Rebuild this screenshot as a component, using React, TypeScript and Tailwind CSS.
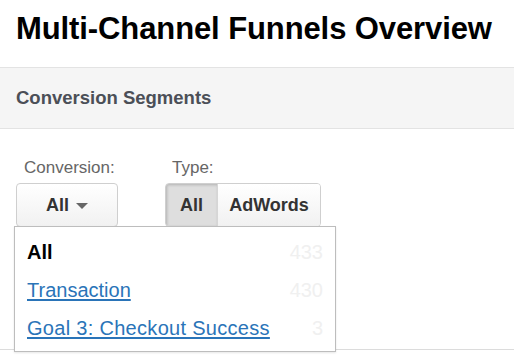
import React from 'react';

const font = { fontFamily: '"Liberation Sans", Arial, sans-serif' };

export default function App() {
  return (
    <div className="w-[514px] h-[363px] bg-white overflow-hidden" style={font}>
      {/* Page title */}
      <div className="h-[67px] pl-4 pt-[11px]">
        <h1 className="text-[31px] leading-[36px] font-bold text-black tracking-[-0.1px]">
          Multi-Channel Funnels Overview
        </h1>
      </div>

      {/* Section header */}
      <div className="h-[62px] bg-[#f5f5f5] border-y border-[#e3e3e3] flex items-center pl-4">
        <span className="text-[18.5px] font-bold text-[#4b4f57]">Conversion Segments</span>
      </div>

      {/* Controls */}
      <div className="h-[221px] border-b border-[#dcdcdc] pt-[29px] pl-4">
        <div className="flex gap-[47px]">
          <div className="flex flex-col">
            <span className="text-[17px] leading-[20px] text-[#666] pl-2">Conversion:</span>
            <div className="relative mt-[5px]">
              <button className="w-[102px] h-[44px] rounded-[4px] border border-[#cfcfcf] bg-gradient-to-b from-white to-[#f1f1f1] flex items-center justify-center gap-[7px] text-[18px] font-bold text-[#333]">
                All
                <svg width="12" height="6" viewBox="0 0 12 6" className="mt-[1px]">
                  <path d="M0 0h12L6 6z" fill="#666" />
                </svg>
              </button>

              {/* Dropdown menu */}
              <div className="absolute left-[-2px] top-[43px] w-[322px] h-[126px] bg-white border border-[#bdbdbd] shadow-[0_1px_2px_rgba(0,0,0,0.1)] px-[12px] pt-[6px]">
                <div className="flex justify-between items-center h-[38px]">
                  <span className="text-[20px] font-bold text-black">All</span>
                  <span className="text-[20px] text-[#f0f0f0]">433</span>
                </div>
                <div className="flex justify-between items-center h-[38px]">
                  <span className="text-[20px] text-[#2a74b8] underline underline-offset-2">Transaction</span>
                  <span className="text-[20px] text-[#f0f0f0]">430</span>
                </div>
                <div className="flex justify-between items-center h-[37px]">
                  <span className="text-[20px] text-[#2a74b8] underline underline-offset-2 tracking-[0.3px]">Goal 3: Checkout Success</span>
                  <span className="text-[20px] text-[#f0f0f0]">3</span>
                </div>
              </div>
            </div>
          </div>

          <div className="flex flex-col">
            <span className="text-[17px] leading-[20px] text-[#666] pl-[7px]">Type:</span>
            <div className="flex mt-[5px] h-[44px] rounded-[4px] border border-[#cfcfcf] overflow-hidden">
              <button className="w-[51px] bg-[#dedede] shadow-[inset_1px_1px_3px_rgba(0,0,0,0.2)] text-[18px] font-bold text-[#333]">
                All
              </button>
              <button className="w-[103px] border-l border-[#d6d6d6] bg-gradient-to-b from-white to-[#f1f1f1] text-[18px] font-bold text-[#333]">
                AdWords
              </button>
            </div>
          </div>
        </div>
      </div>
    </div>
  );
}
